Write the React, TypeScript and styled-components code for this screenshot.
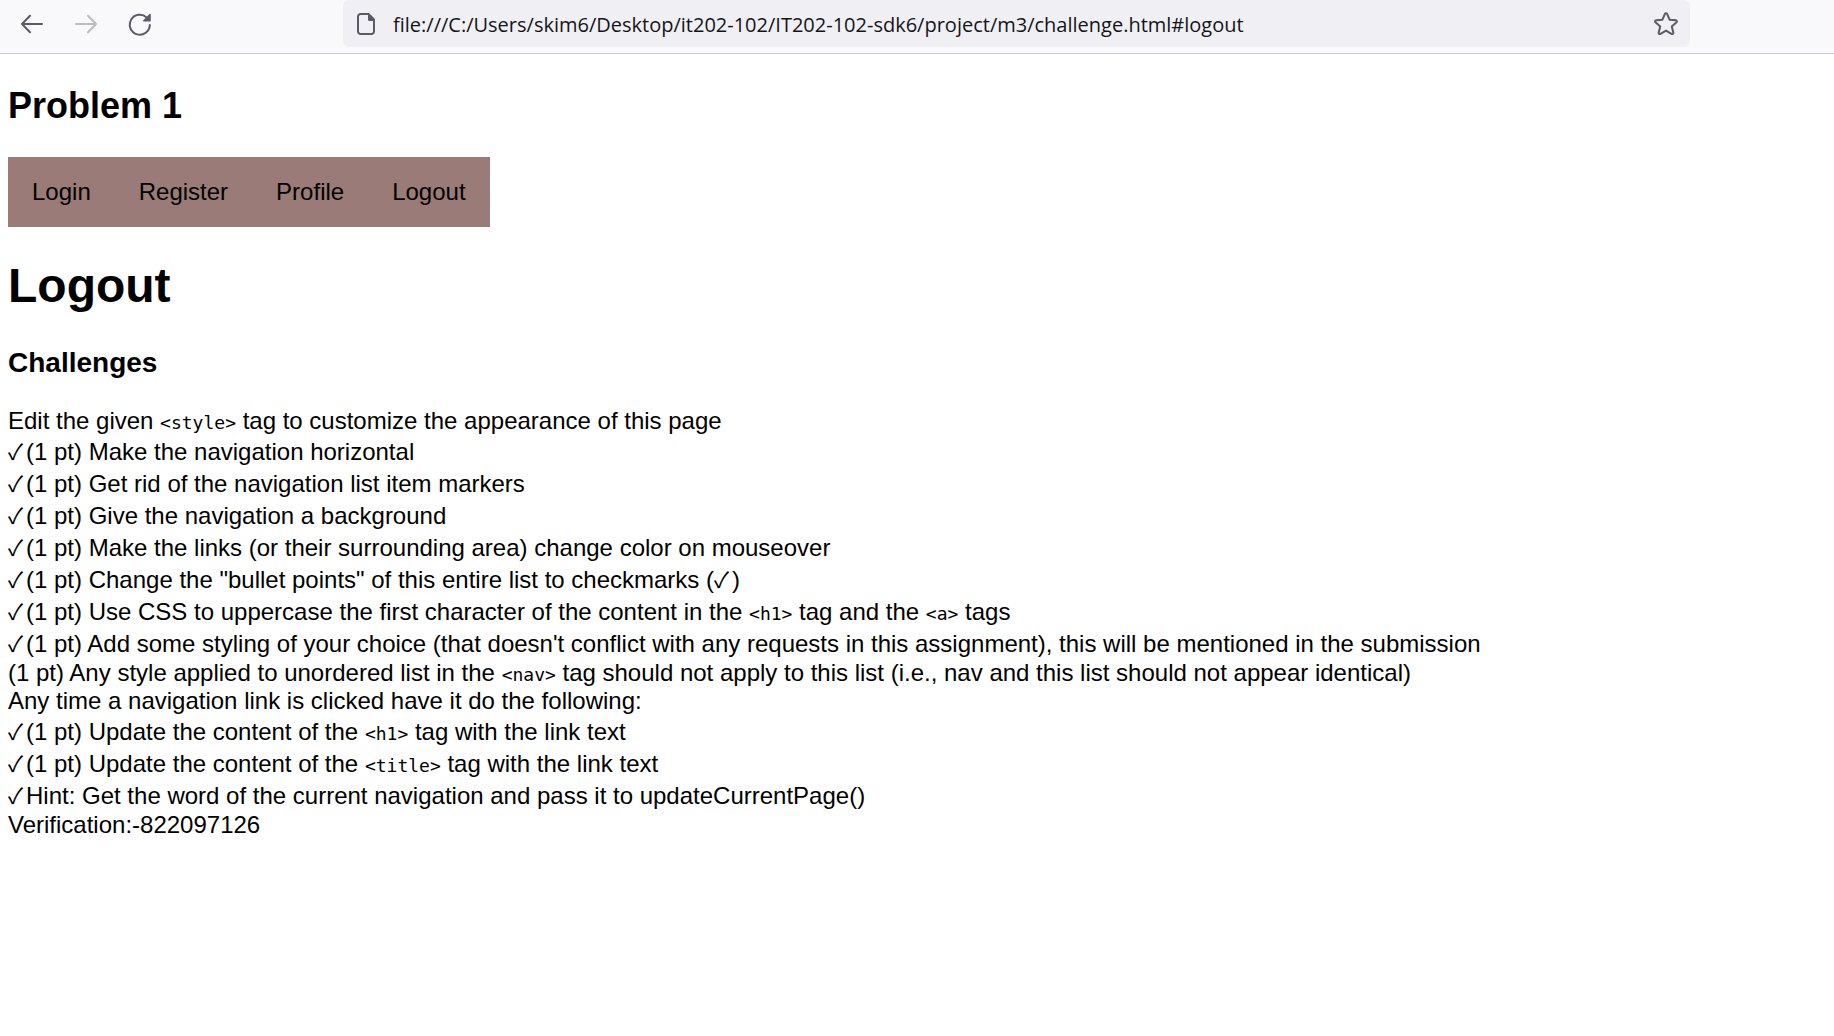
import React, { useState } from "react";
import styled, { createGlobalStyle } from "styled-components";

const GlobalStyle = createGlobalStyle`
  body {
    margin: 0;
    background: #ffffff;
    color: #000000;
    font: 24px/28px "Liberation Sans", Arial, sans-serif;
  }
`;

const Toolbar = styled.header`
  display: flex;
  align-items: flex-start;
  justify-content: space-between;
  padding: 0 144px 6px 8px;
  background: #f9f9fb;
  border-bottom: 1px solid #cccccc;
`;

const ToolbarButtons = styled.div`
  display: flex;
  gap: 6px;
  flex: 0 0 335px;
`;

const IconButton = styled.button`
  display: flex;
  align-items: center;
  justify-content: center;
  flex: none;
  width: 48px;
  height: 47px;
  padding: 0;
  border: 0;
  background: none;
  color: #5b5b66;

  &:disabled {
    color: #bcbcc2;
  }
`;

const AddressBar = styled.div`
  display: flex;
  align-items: center;
  flex: 1;
  height: 47px;
  padding-left: 14px;
  border-radius: 6px;
  background: #f0f0f4;
  color: #5b5b66;
`;

const AddressInput = styled.input`
  flex: 1;
  min-width: 0;
  margin-left: 18px;
  padding: 2px 0 0;
  border: 0;
  outline: 0;
  background: none;
  color: #15141a;
  font: 20px/28px "Open Sans", "Noto Sans", sans-serif;
`;

const Page = styled.main`
  padding: 31px 8px;
`;

const ProblemTitle = styled.h2`
  margin: 0 0 30px;
  font-size: 36px;
  line-height: 42px;
`;

const Nav = styled.nav`
  width: fit-content;
  background: #9a7b78;
`;

const NavList = styled.ul`
  display: flex;
  margin: 0;
  padding: 0;
  list-style: none;
`;

const NavLink = styled.a`
  display: block;
  padding: 21px 24px;
  color: #000000;
  text-decoration: none;

  &:hover {
    background: #b79a97;
  }
`;

const PageTitle = styled.h1`
  margin: 31px 0 34px;
  font-size: 48px;
  line-height: 55px;
`;

const SectionTitle = styled.h3`
  margin: 0 0 28px;
  font-size: 28px;
  line-height: 32px;
`;

const ChallengeList = styled.ul`
  margin: 0;
  padding: 0;
  list-style: none;
`;

const Item = styled.li<{ $checked?: boolean }>`
  padding: ${(p) => (p.$checked ? "3px 0 1px" : "0")};
`;

const Check = styled.span`
  display: inline-block;
  width: 18px;
  font-family: "Noto Sans CJK JP", sans-serif;
  font-size: 22px;
  line-height: 24px;
`;

const Code = styled.code`
  font-family: "DejaVu Sans Mono", monospace;
  font-size: 18px;
  line-height: 24px;
`;

const BackIcon = () => (
  <svg width="24" height="24" viewBox="0 0 24 24" fill="none" stroke="currentColor" strokeWidth="2" strokeLinecap="round" strokeLinejoin="round">
    <path d="M22 12H2M10 3.8L2 12l8 8.2" />
  </svg>
);

const ForwardIcon = () => (
  <svg width="24" height="24" viewBox="0 0 24 24" fill="none" stroke="currentColor" strokeWidth="2" strokeLinecap="round" strokeLinejoin="round">
    <path d="M2 12h20M14 3.8l8 8.2-8 8.2" />
  </svg>
);

const ReloadIcon = () => (
  <svg width="24" height="24" viewBox="0 0 24 24" fill="none">
    <path d="M21.800 13a10 10 0 1 1-3.200-7.600" stroke="currentColor" strokeWidth="2" strokeLinecap="round" />
    <path d="M22.800 2.600v6.200a.8.8 0 0 1-.8.8h-6.200c-.7 0-1-.8-.5-1.300l6.200-6.200c.5-.5 1.300-.2 1.300.5z" fill="currentColor" />
  </svg>
);

const FileIcon = () => (
  <svg width="18" height="22" viewBox="0 0 18 22" fill="none">
    <path d="M3.500 1h8L17 6.500v12A2.500 2.500 0 0 1 14.500 21h-11A2.500 2.500 0 0 1 1 18.500v-15A2.500 2.500 0 0 1 3.500 1z" stroke="currentColor" strokeWidth="2" />
    <path d="M11 .5L17.500 7v1H12.500A1.500 1.500 0 0 1 11 6.500z" fill="currentColor" />
  </svg>
);

const StarIcon = () => (
  <svg width="24" height="24" viewBox="0 0 24 24" fill="none" stroke="currentColor" strokeWidth="2" strokeLinejoin="round">
    <path d="M10.900 1.900a1.200 1.200 0 0 1 2.200 0l2.500 5.800 6.200.5a1.200 1.200 0 0 1 .7 2.100L17.800 14.400l1.500 6.200a1.200 1.200 0 0 1-1.800 1.300L12 18.600l-5.500 3.300a1.200 1.200 0 0 1-1.800-1.300l1.500-6.200L1.500 10.300a1.200 1.200 0 0 1 .7-2.100l6.200-.5z" />
  </svg>
);

const pages = ["Login", "Register", "Profile", "Logout"];

export default function App() {
  const [current, setCurrent] = useState("Logout");
  const [address, setAddress] = useState(
    "file:///C:/Users/skim6/Desktop/it202-102/IT202-102-sdk6/project/m3/challenge.html#logout"
  );

  return (
    <>
      <GlobalStyle />
      <Toolbar>
        <ToolbarButtons>
          <IconButton aria-label="Back"><BackIcon /></IconButton>
          <IconButton aria-label="Forward" disabled><ForwardIcon /></IconButton>
          <IconButton aria-label="Reload"><ReloadIcon /></IconButton>
        </ToolbarButtons>
        <AddressBar>
          <FileIcon />
          <AddressInput aria-label="Address" value={address} onChange={(e) => setAddress(e.target.value)} />
          <IconButton aria-label="Bookmark this page"><StarIcon /></IconButton>
        </AddressBar>
      </Toolbar>
      <Page>
        <ProblemTitle>Problem 1</ProblemTitle>
        <Nav>
          <NavList>
            {pages.map((page) => (
              <li key={page}>
                <NavLink href={`#${page.toLowerCase()}`} onClick={() => setCurrent(page)}>
                  {page}
                </NavLink>
              </li>
            ))}
          </NavList>
        </Nav>
        <PageTitle>{current}</PageTitle>
        <SectionTitle>Challenges</SectionTitle>
        <ChallengeList>
          <Item>Edit the given <Code>&lt;style&gt;</Code> tag to customize the appearance of this page</Item>
          <Item $checked><Check>✓</Check>(1 pt) Make the navigation horizontal</Item>
          <Item $checked><Check>✓</Check>(1 pt) Get rid of the navigation list item markers</Item>
          <Item $checked><Check>✓</Check>(1 pt) Give the navigation a background</Item>
          <Item $checked><Check>✓</Check>(1 pt) Make the links (or their surrounding area) change color on mouseover</Item>
          <Item $checked><Check>✓</Check>(1 pt) Change the "bullet points" of this entire list to checkmarks (<Check>✓</Check>)</Item>
          <Item $checked><Check>✓</Check>(1 pt) Use CSS to uppercase the first character of the content in the <Code>&lt;h1&gt;</Code> tag and the <Code>&lt;a&gt;</Code> tags</Item>
          <Item $checked><Check>✓</Check>(1 pt) Add some styling of your choice (that doesn't conflict with any requests in this assignment), this will be mentioned in the submission</Item>
          <Item>(1 pt) Any style applied to unordered list in the <Code>&lt;nav&gt;</Code> tag should not apply to this list (i.e., nav and this list should not appear identical)</Item>
          <Item>Any time a navigation link is clicked have it do the following:</Item>
          <Item $checked><Check>✓</Check>(1 pt) Update the content of the <Code>&lt;h1&gt;</Code> tag with the link text</Item>
          <Item $checked><Check>✓</Check>(1 pt) Update the content of the <Code>&lt;title&gt;</Code> tag with the link text</Item>
          <Item $checked><Check>✓</Check>Hint: Get the word of the current navigation and pass it to updateCurrentPage()</Item>
          <Item>Verification:-822097126</Item>
        </ChallengeList>
      </Page>
    </>
  );
}
